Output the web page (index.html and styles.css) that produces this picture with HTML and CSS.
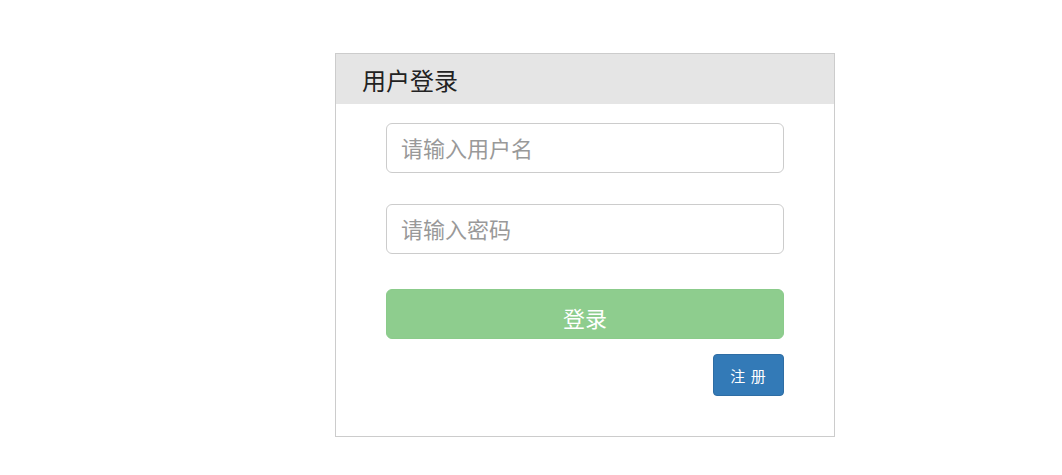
FILE: index.html
```html
<!DOCTYPE html>
<html lang="zh">
<head>
<meta charset="utf-8">
<title>用户登录</title>
<link rel="stylesheet" href="styles.css">
</head>
<body>
<div class="panel">
  <div class="panel-head">用户登录</div>
  <div class="panel-body">
    <input class="field" type="text" placeholder="请输入用户名">
    <input class="field field-2" type="password" placeholder="请输入密码">
    <button class="btn-login" type="button">登录</button>
    <div class="row-reg"><button class="btn-reg" type="button">注 册</button></div>
  </div>
</div>
</body>
</html>
```
FILE: styles.css
```css
html, body { margin: 0; padding: 0; background: #fff; }
body { font-family: "Liberation Sans", "Noto Sans CJK SC", sans-serif; }
.panel {
  width: 498px;
  margin: 53px 0 0 335px;
  border: 1px solid #cccccc;
  box-sizing: content-box;
}
.panel-head {
  height: 50px;
  background: #e5e5e5;
  padding-left: 26px;
  font-family: "Noto Sans CJK SC", serif;
  font-size: 24px;
  line-height: 51px;
  color: #222;
}
.panel-body {
  padding: 19px 50px 40px 50px;
  display: flex;
  flex-direction: column;
}
.field {
  display: block;
  width: 100%;
  height: 50px;
  box-sizing: border-box;
  border: 1px solid #cccccc;
  border-radius: 6px;
  padding: 4px 14px 0 14px;
  font-family: "Liberation Sans", "Noto Sans CJK SC", sans-serif;
  font-size: 22px;
  color: #555;
  outline: none;
  background: #fff;
}
.field::placeholder { color: #999; }
.field-2 { margin-top: 31px; }
.btn-login {
  margin-top: 35px;
  width: 100%;
  height: 50px;
  border: 1px solid #8bcb8b;
  border-radius: 6px;
  background: #8ecd8e;
  color: #fff;
  font-family: "Noto Sans CJK SC", serif;
  font-size: 22px;
  padding: 5px 0 0 0;
}
.row-reg {
  display: flex;
  justify-content: flex-end;
  margin-top: 15px;
}
.btn-reg {
  width: 71px;
  height: 42px;
  border: 1px solid #2e6da4;
  border-radius: 4px;
  background: #337ab7;
  color: #fff;
  font-family: "Noto Sans CJK SC", sans-serif;
  font-size: 15px;
  letter-spacing: 1px;
  padding: 0;
}
```
